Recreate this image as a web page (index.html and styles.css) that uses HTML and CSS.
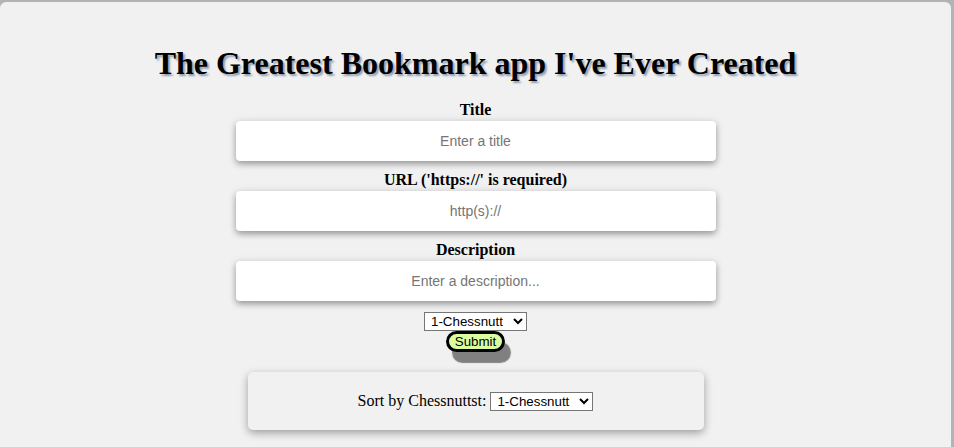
FILE: index.html
```html
<!DOCTYPE html>
<html>
<head>
<meta charset="utf-8">
<link rel="stylesheet" href="styles.css">
</head>
<body>
<div class="window">
  <h1 class="app-title">The Greatest Bookmark app I've Ever Created</h1>
  <form class="bm-form">
    <label class="field-label" for="title">Title</label>
    <input class="field-input" id="title" type="text" placeholder="Enter a title">
    <label class="field-label" for="url">URL ('https://' is required)</label>
    <input class="field-input" id="url" type="text" placeholder="http(s)://">
    <label class="field-label" for="desc">Description</label>
    <input class="field-input" id="desc" type="text" placeholder="Enter a description...">
    <select class="rating-select">
      <option>1-Chessnutt</option>
      <option>2-Chessnutts</option>
      <option>3-Chessnutts</option>
      <option>4-Chessnutts</option>
      <option>5-Chessnutts</option>
    </select>
    <button class="submit-btn" type="button">Submit</button>
  </form>
  <div class="sort-box">
    <span class="sort-label">Sort by Chessnuttst:</span>
    <select class="rating-select sort-select">
      <option>1-Chessnutt</option>
      <option>2-Chessnutts</option>
      <option>3-Chessnutts</option>
      <option>4-Chessnutts</option>
      <option>5-Chessnutts</option>
    </select>
  </div>
</div>
</body>
</html>
```
FILE: styles.css
```css
html, body {
  margin: 0;
  padding: 0;
  background: #b3b3b3;
  height: 100%;
  overflow: hidden;
}

.window {
  margin: 2px 3px 0 0;
  background: #f1f1f1;
  border-radius: 6px 6px 0 0;
  height: calc(100% - 2px);
  padding-top: 43px;
  box-sizing: border-box;
  font-family: "Liberation Serif", "Times New Roman", serif;
  display: flex;
  flex-direction: column;
  align-items: center;
}

.app-title {
  margin: 0;
  font-size: 32px;
  line-height: 37px;
  font-weight: bold;
  color: #000;
  text-shadow: 2px 2px 2px #8c9cb0;
}

.bm-form {
  margin-top: 19px;
  display: flex;
  flex-direction: column;
  align-items: center;
}

.field-label {
  font-size: 16px;
  font-weight: bold;
  line-height: 18px;
  margin-bottom: 2px;
}

.field-input {
  width: 480px;
  height: 40px;
  box-sizing: border-box;
  border: none;
  border-radius: 4px;
  background: #fff;
  box-shadow: 0 3px 6px rgba(0, 0, 0, 0.35), 0 0 12px rgba(0, 0, 0, 0.06);
  text-align: center;
  font-family: "Liberation Sans", Arial, sans-serif;
  font-size: 14px;
  margin-bottom: 10px;
  outline: none;
}

.field-input::placeholder {
  color: #757575;
}

.rating-select {
  margin-top: 1px;
  font-family: "Liberation Sans", Arial, sans-serif;
  font-size: 13.33px;
  height: 19px;
  padding: 0 0 0 2px;
  border: 1px solid #767676;
  border-radius: 0;
  background: #fff;
  color: #000;
  width: 103px;
}

.submit-btn {
  margin-top: 0;
  width: 59px;
  height: 21px;
  padding: 0;
  border: 3px solid #000;
  border-radius: 11px;
  background: #dcfca0;
  font-family: "Liberation Sans", Arial, sans-serif;
  font-size: 13.33px;
  line-height: 14px;
  color: #000;
  box-shadow: 6px 11px 1px #808080;
}

.sort-box {
  margin-top: 20px;
  width: 456px;
  height: 58px;
  border-radius: 5px;
  background: #f1f1f1;
  box-shadow: 0 3px 8px rgba(0, 0, 0, 0.35);
  display: flex;
  justify-content: center;
  align-items: center;
  gap: 4px;
}

.sort-label {
  font-size: 16px;
}

.sort-select {
  margin-top: 0;
}
```
